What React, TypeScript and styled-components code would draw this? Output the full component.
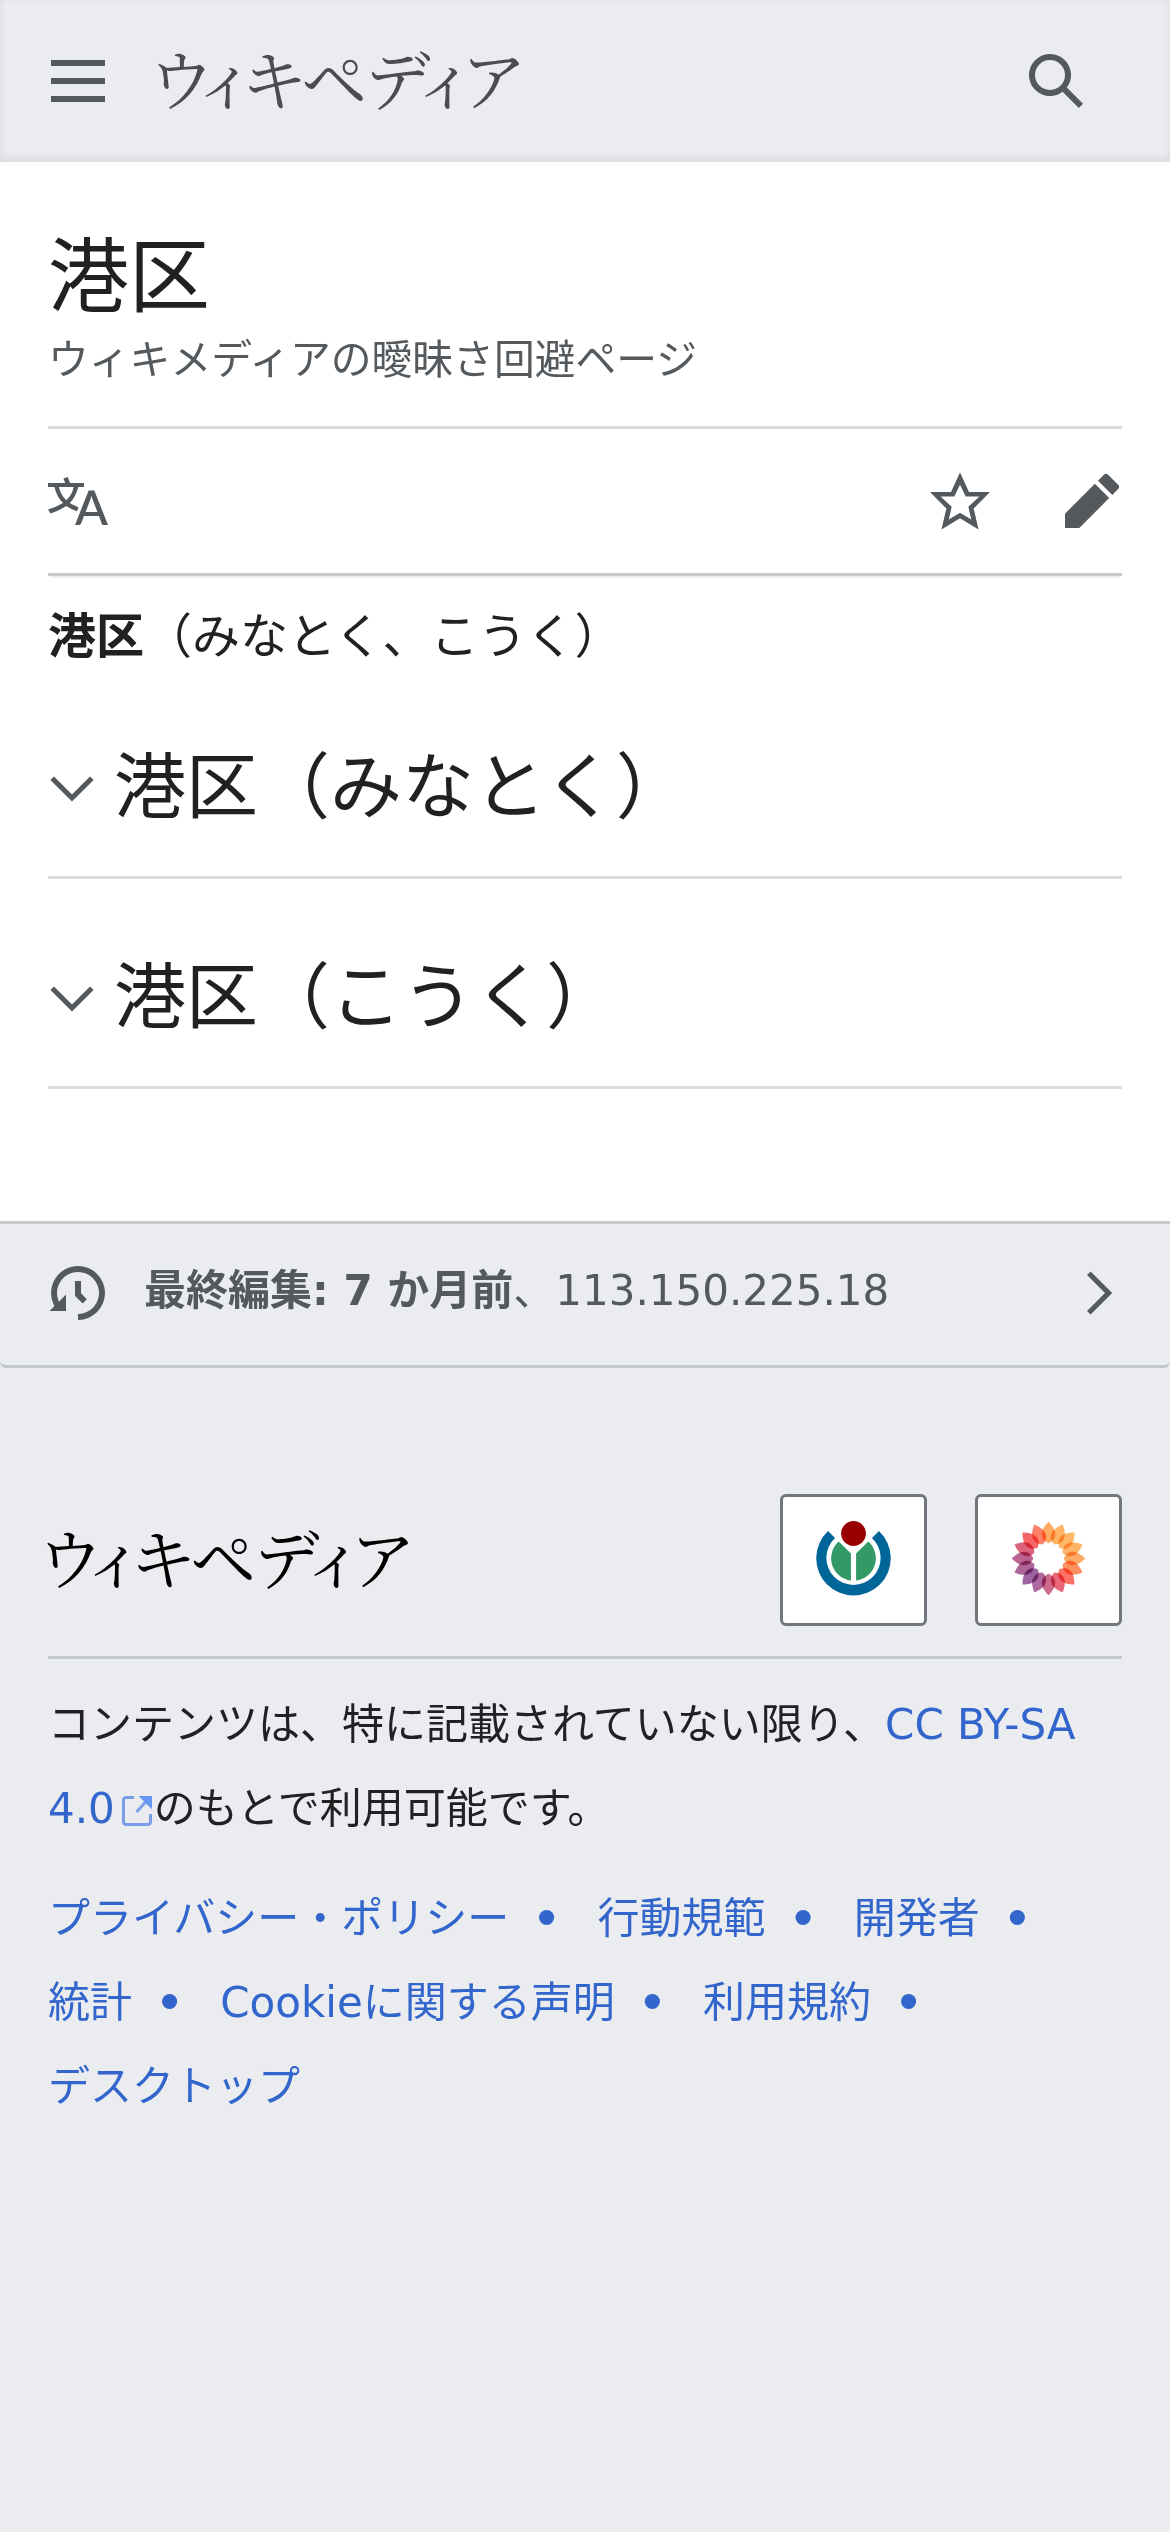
import React from "react";
import styled, { createGlobalStyle } from "styled-components";

const GlobalStyle = createGlobalStyle`
  * { box-sizing: border-box; }
  html, body { margin: 0; padding: 0; background: #eaecf0; }
  body {
    font-family: "DejaVu Sans", "Noto Sans CJK JP", sans-serif;
    color: #202122;
  }
`;

const Page = styled.div`
  width: 1170px;
  min-height: 2532px;
  background: #eaecf0;
  display: flex;
  flex-direction: column;
`;

const Header = styled.header`
  height: 162px;
  padding: 0 84px 0 48px;
  background: #eaecf0;
  box-shadow: inset 0 -3px 9px rgba(0, 0, 0, 0.08);
  display: flex;
  align-items: center;
`;

const Icon = styled.svg<{ $size?: number }>`
  display: block;
  flex: none;
  width: ${(p) => p.$size ?? 60}px;
  height: ${(p) => p.$size ?? 60}px;
  fill: #54595d;
`;

const Wordmark = styled.span<{ $color: string; $indent: number }>`
  display: block;
  flex: 1;
  height: 72px;
  margin: -9px 0 0 ${(p) => p.$indent}px;
  color: ${(p) => p.$color};
  font-family: "Noto Serif CJK JP", "Noto Sans CJK JP", serif;
  font-weight: 400;
  font-size: 66px;
  line-height: 72px;
  font-feature-settings: "palt";
  letter-spacing: -1.5px;
  white-space: nowrap;
`;

const Article = styled.main`
  height: 1059px;
  padding: 0 48px;
  background: #fff;
`;

const TitleBlock = styled.div`
  height: 267px;
  padding-top: 64px;
  border-bottom: 3px solid #d9dbdc;
`;

const Title = styled.h1`
  margin: 0;
  font-size: 81px;
  font-weight: 400;
  line-height: 102px;
`;

const Tagline = styled.div`
  font-size: 40.8px;
  line-height: 65px;
  color: #54595d;
`;

const Toolbar = styled.nav`
  height: 147px;
  display: flex;
  align-items: center;
  border-bottom: 3px solid #c8cacb;
  box-shadow: 0 3px 2px -2px rgba(0, 0, 0, 0.12);
`;

const ToolbarEnd = styled.div`
  margin-left: auto;
  display: flex;
  gap: 72px;
`;

const Lead = styled.p`
  margin: 0;
  padding-top: 20px;
  height: 120px;
  font-size: 48px;
  line-height: 80px;
`;

const Section = styled.section<{ $height: number }>`
  height: ${(p) => p.$height}px;
  padding-bottom: 59px;
  display: flex;
  align-items: flex-end;
  border-bottom: 3px solid #dadcdd;
`;

const SectionHeading = styled.h2`
  margin: 0;
  display: flex;
  align-items: center;
  gap: 18px;
  font-size: 72px;
  font-weight: 400;
  line-height: 60px;
`;

const SectionLabel = styled.span`
  margin-top: -4px;
`;

const LastModified = styled.div`
  height: 147px;
  padding: 0 47px 3px 48px;
  display: flex;
  align-items: center;
  border-top: 3px solid #c8cbce;
  border-bottom: 3px solid #c3c6ca;
  border-radius: 0 0 6px 6px;
  color: #54595d;
`;

const LastModifiedText = styled.span`
  flex: 1;
  margin-left: 36px;
  padding-bottom: 5px;
  font-size: 42px;
  line-height: 60px;
  white-space: pre;
`;

const Footer = styled.footer`
  padding: 126px 48px 0;
`;

const Brand = styled.div`
  height: 165px;
  padding-bottom: 30px;
  display: flex;
  align-items: center;
  gap: 48px;
  border-bottom: 3px solid #c8cbce;
`;

const Badge = styled.a`
  width: 147px;
  height: 132px;
  padding-bottom: 3px;
  display: flex;
  align-items: center;
  justify-content: center;
  background: #fff;
  border: 3px solid #72777d;
  border-radius: 6px;
`;

const License = styled.p`
  margin: 24px 0 0;
  font-size: 42px;
  line-height: 84px;
`;

const Link = styled.a`
  color: #3366cc;
  text-decoration: none;
`;

const ExternalMark = styled.svg`
  width: 30px;
  height: 30px;
  margin: 0 2px 0 7px;
  vertical-align: -3px;
  fill: none;
`;

const Places = styled.ul`
  margin: 26px 0 0;
  padding: 0;
  list-style: none;
  font-size: 42px;
  line-height: 84px;
  color: #3366cc;
`;

const Place = styled.li`
  display: inline-block;
  &:not(:last-child)::after {
    content: "•";
    margin: 0 35.4px 0 22.2px;
    font-size: 52px;
    line-height: 0;
    vertical-align: -4px;
  }
`;

const places = [
  "プライバシー・ポリシー",
  "行動規範",
  "開発者",
  "統計",
  "Cookieに関する声明",
  "利用規約",
  "デスクトップ",
];

const sections = [
  { title: "港区（みなとく）", height: 183 },
  { title: "港区（こうく）", height: 210 },
];

/* Petal colours, clockwise from twelve o'clock. */
const petals = [
  "#fd9a42",
  "#fda648",
  "#fdac4a",
  "#fda64a",
  "#fc9a48",
  "#fb7a42",
  "#f95648",
  "#e64a60",
  "#c44c72",
  "#a04a90",
  "#8c4892",
  "#9e4784",
  "#ae447e",
  "#d64862",
  "#f44a4e",
  "#fb6a4a",
];

const Petal = styled.path`
  fill-opacity: 0.84;
  mix-blend-mode: multiply;
`;

function MediaWikiMark() {
  return (
    <Icon $size={75} viewBox="-37.5 -37.5 75 75">
      {petals.map((fill, i) => (
        <Petal
          key={i}
          d="M0-36.8C4.200-32.500 7.200-28 6.700-23.300C6.300-19.400 3.900-17 0-15.200C-3.900-17-6.300-19.400-6.700-23.300C-7.200-28-4.200-32.500 0-36.800Z"
          fill={fill}
          transform={`rotate(${i * 22.5})`}
        />
      ))}
    </Icon>
  );
}

function WikimediaMark() {
  return (
    <Icon $size={75} viewBox="-37.5 -38 75 75.5">
      <path fill="#006699" d="M-25.6-27.9A37.5 37.5 0 1 0 25.6-27.9L18.6-20.9A27.3 27.3 0 1 1-18.6-20.9Z" />
      <path fill="#339966" d="M-14.9-17.3A22.5 22.5 0 0 0-2.6 21.9V-5.2ZM14.9-17.3A22.5 22.5 0 0 1 2.6 21.9V-5.2Z" />
      <circle fill="#990000" cx="0" cy="-25.4" r="12.5" />
    </Icon>
  );
}

export default function App() {
  return (
    <>
      <GlobalStyle />
      <Page>
        <Header>
          <Icon viewBox="0 0 20 20">
            <path d="M1 3v2h18V3zm0 8h18V9H1zm0 6h18v-2H1z" />
          </Icon>
          <Wordmark $color="#4b4c4e" $indent={43}>ウィキペディア</Wordmark>
          <Icon viewBox="0 0 20 20">
            <path d="M12.2 13.6a7 7 0 1 1 1.4-1.4l5.4 5.4-1.4 1.4zM3 8a5 5 0 1 0 10 0A5 5 0 0 0 3 8" />
          </Icon>
        </Header>

        <Article>
          <TitleBlock>
            <Title>港区</Title>
            <Tagline>ウィキメディアの曖昧さ回避ページ</Tagline>
          </TitleBlock>
          <Toolbar>
            <Icon viewBox="0 0 20 20">
              <path d="M20 18h-1.44a.6.6 0 0 1-.4-.12.8.8 0 0 1-.23-.31L17 15h-5l-1 2.54a.8.8 0 0 1-.22.3.6.6 0 0 1-.4.14H9l4.55-11.47h1.89zm-3.53-4.31L14.89 9.5a12 12 0 0 1-.39-1.24q-.09.37-.19.69l-.19.56-1.58 4.19zm-6.3-1.58a13.4 13.4 0 0 1-2.91-1.41 11.46 11.46 0 0 0 2.81-5.37H12V4H7.31a4 4 0 0 0-.2-.56C6.87 2.79 6.6 2 6.6 2l-1.47.5s.4.89.6 1.5H0v1.33h2.15A11.23 11.23 0 0 0 5 10.7a17.2 17.2 0 0 1-5 2.1q.56.82.87 1.38a23.3 23.3 0 0 0 5.22-2.51 15.6 15.6 0 0 0 3.56 1.77zM3.63 5.33h4.91a8.1 8.1 0 0 1-2.45 4.45 9.1 9.1 0 0 1-2.46-4.45" />
            </Icon>
            <ToolbarEnd>
              <Icon viewBox="0 0 20 20">
                <path d="M20 7h-7L10 .5 7 7H0l5.46 5.47-1.64 7 6.18-3.7 6.18 3.73-1.63-7zm-10 6.9-3.76 2.27 1-4.28L3.5 8.5h4.61L10 4.6l1.9 3.9h4.6l-3.73 3.4 1 4.28z" />
              </Icon>
              <Icon viewBox="0 0 20 20">
                <path d="m16.77 8 1.94-2a1 1 0 0 0 0-1.41l-3.34-3.3a1 1 0 0 0-1.41 0L12 3.23zM1 14.25V19h4.75l9.96-9.96-4.75-4.75z" />
              </Icon>
            </ToolbarEnd>
          </Toolbar>
          <Lead>
            <b>港区</b>（みなとく、こうく）
          </Lead>
          {sections.map((s) => (
            <Section key={s.title} $height={s.height}>
              <SectionHeading>
                <Icon $size={48} viewBox="0 0 20 20">
                  <path d="m17.5 4.75-7.5 7.5-7.5-7.5L1 6.25l9 9 9-9z" />
                </Icon>
                <SectionLabel>{s.title}</SectionLabel>
              </SectionHeading>
            </Section>
          ))}
        </Article>

        <LastModified>
          <Icon viewBox="0 0 20 20">
            <path d="M9 6v5h.06l2.48 2.47 1.41-1.41L11 10.11V6z" />
            <path d="M10 1a9 9 0 0 0-7.85 13.35L.5 16H6v-5.5l-2.38 2.38A7 7 0 1 1 10 17v2a9 9 0 0 0 0-18" />
          </Icon>
          <LastModifiedText>
            <b>最終編集: 7 か月前</b>、113.150.225.18
          </LastModifiedText>
          <Icon $size={48} viewBox="0 0 20 20">
            <path d="M6.5 1 5 2.5l7.5 7.5L5 17.5 6.5 19l9-9z" />
          </Icon>
        </LastModified>

        <Footer>
          <Brand>
            <Wordmark $color="#000" $indent={-8}>ウィキペディア</Wordmark>
            <Badge>
              <WikimediaMark />
            </Badge>
            <Badge>
              <MediaWikiMark />
            </Badge>
          </Brand>
          <License>
            コンテンツは、特に記載されていない限り、
            <Link>
              CC BY-SA 4.0
              <ExternalMark viewBox="0 0 30 30">
                <path
                  d="M12 1.5H4A2.5 2.5 0 0 0 1.5 4V26A2.5 2.5 0 0 0 4 28.5H26A2.5 2.5 0 0 0 28.5 26V18M14.5 16L24 5.5"
                  stroke="#7a9ee8"
                  strokeWidth="3"
                />
                <path d="M16.5 0H30V13.5Z" fill="#6896f3" />
              </ExternalMark>
            </Link>
            のもとで利用可能です。
          </License>
          <Places>
            {places.map((name) => (
              <Place key={name}>{name}</Place>
            ))}
          </Places>
        </Footer>
      </Page>
    </>
  );
}
